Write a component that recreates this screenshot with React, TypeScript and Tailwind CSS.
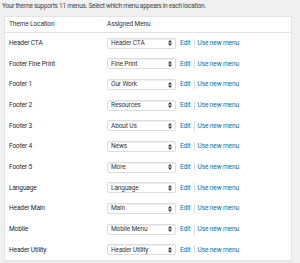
const locations = [
  { name: "Header CTA", menu: "Header CTA" },
  { name: "Footer Fine Print", menu: "Fine Print" },
  { name: "Footer 1", menu: "Our Work" },
  { name: "Footer 2", menu: "Resources" },
  { name: "Footer 3", menu: "About Us" },
  { name: "Footer 4", menu: "News" },
  { name: "Footer 5", menu: "More" },
  { name: "Language", menu: "Language" },
  { name: "Header Main", menu: "Main" },
  { name: "Mobile", menu: "Mobile Menu" },
  { name: "Header Utility", menu: "Header Utility" },
];

function SelectArrows() {
  return (
    <svg className="w-[4px] h-[6px]" viewBox="0 0 4 6" fill="#32373c">
      <path d="M0 2.5 L2 0 L4 2.5 Z" />
      <path d="M0 3.5 L2 6 L4 3.5 Z" />
    </svg>
  );
}

function Row({ name, menu }: { name: string; menu: string }) {
  return (
    <div className="flex items-center h-[20.66px]">
      <div className="w-[102px] pl-[4px] text-[#23282d]">{name}</div>
      <div className="flex items-center">
        <div className="w-[69px] h-[11px] flex items-center justify-between pl-[3px] pr-[3px] bg-white border border-[#ddd] rounded-[2px] shadow-[inset_0_1px_1px_rgba(0,0,0,0.07)] text-[#32373c]">
          <span>{menu}</span>
          <SelectArrows />
        </div>
        <a className="ml-[4px] text-[#0073aa]">Edit</a>
        <span className="mx-[3px] w-px h-[9px] bg-[#ddd]" />
        <a className="text-[#0073aa]">Use new menu</a>
      </div>
    </div>
  );
}

export default function App() {
  return (
    <div
      className="w-[300px] h-[263px] bg-[#f1f1f1] overflow-hidden text-[6.6px] tracking-[-0.15px] leading-none"
      style={{ fontFamily: 'Roboto, "Liberation Sans", Arial, sans-serif' }}
    >
      <p className="pl-[2px] pt-[3px] h-[16px] text-[#444] tracking-[-0.3px]">
        Your theme supports 11 menus. Select which menu appears in each location.
      </p>
      <div className="ml-[4px] w-[288px] bg-white border border-[#e5e5e5] shadow-[0_1px_1px_rgba(0,0,0,0.04)]">
        <div className="flex items-center h-[16px] border-b border-[#e1e1e1] text-[#32373c]">
          <div className="w-[102px] pl-[4px]">Theme Location</div>
          <div>Assigned Menu</div>
        </div>
        {locations.map((l) => (
          <Row key={l.name} name={l.name} menu={l.menu} />
        ))}
      </div>
    </div>
  );
}
